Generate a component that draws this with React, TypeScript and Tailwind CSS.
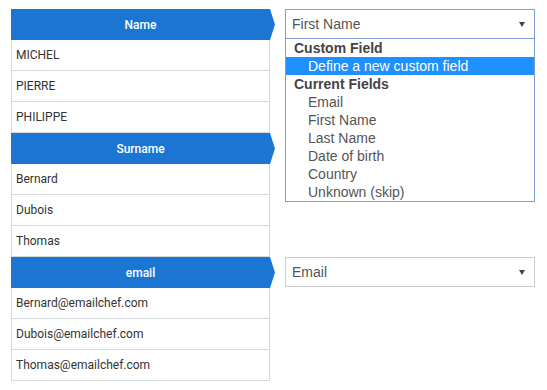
import React from "react";

const groups = [
  { title: "Name", rows: ["MICHEL", "PIERRE", "PHILIPPE"], field: "First Name", open: true },
  { title: "Surname", rows: ["Bernard", "Dubois", "Thomas"], field: "", open: false },
  {
    title: "email",
    rows: ["Bernard@emailchef.com", "Dubois@emailchef.com", "Thomas@emailchef.com"],
    field: "Email",
    open: false,
  },
];

const options = [
  { label: "Custom Field", group: true },
  { label: "Define a new custom field", active: true },
  { label: "Current Fields", group: true },
  { label: "Email" },
  { label: "First Name" },
  { label: "Last Name" },
  { label: "Date of birth" },
  { label: "Country" },
  { label: "Unknown (skip)" },
];

const Caret = () => (
  <svg width="6" height="5" viewBox="0 0 6 5" className="shrink-0">
    <path d="M0 0 H6 L3 5 Z" fill="#444" />
  </svg>
);

const FieldSelect = ({ value, open }: { value: string; open: boolean }) => (
  <div className="relative w-[250px]">
    <div
      className={`flex h-[30px] items-center justify-between border bg-white pl-[6px] pr-[9px] text-[14px] text-[#555] ${
        open ? "border-[#7e9fd6]" : "border-[#cccccc]"
      }`}
    >
      <span>{value}</span>
      <Caret />
    </div>
    {open && (
      <ul className="absolute left-0 top-[29px] z-10 w-[250px] border border-[#7e9fd6] bg-white text-[14px] leading-[18px]">
        {options.map((o) => (
          <li
            key={o.label}
            className={
              o.group
                ? "pl-[8px] font-bold text-[#444]"
                : o.active
                ? "bg-[#1e90ff] pl-[22px] text-white"
                : "pl-[22px] text-[#555]"
            }
          >
            {o.label}
          </li>
        ))}
      </ul>
    )}
  </div>
);

const App = () => {
  return (
    <div
      className="min-h-[390px] w-[547px] bg-white pl-[11px] pt-[9px]"
      style={{ fontFamily: "'Liberation Sans', Arial, sans-serif" }}
    >
      {groups.map((g) => (
        <div key={g.title} className="flex items-start gap-[10px]">
          <div className="w-[264px]">
            <div className="flex h-[31px]">
              <div
                className="flex w-[259px] items-center justify-center bg-[#1b76d3] text-[12px] font-medium text-white"
                style={{ fontFamily: "Roboto, sans-serif" }}
              >
                {g.title}
              </div>
              <svg width="5" height="31" viewBox="0 0 5 31" className="shrink-0">
                <path d="M0 0 L5 15.5 L0 31 Z" fill="#1b76d3" />
              </svg>
            </div>
            <div className="w-[259px] border-x border-[#d5d9de]">
              {g.rows.map((r) => (
                <div
                  key={r}
                  className="flex h-[31px] items-center border-b border-[#d5d9de] pl-[4px] text-[12px] text-[#333]"
                  style={{ fontFamily: "Roboto, sans-serif" }}
                >
                  {r}
                </div>
              ))}
            </div>
          </div>
          {g.field && <FieldSelect value={g.field} open={g.open} />}
        </div>
      ))}
    </div>
  );
};

export default App;
